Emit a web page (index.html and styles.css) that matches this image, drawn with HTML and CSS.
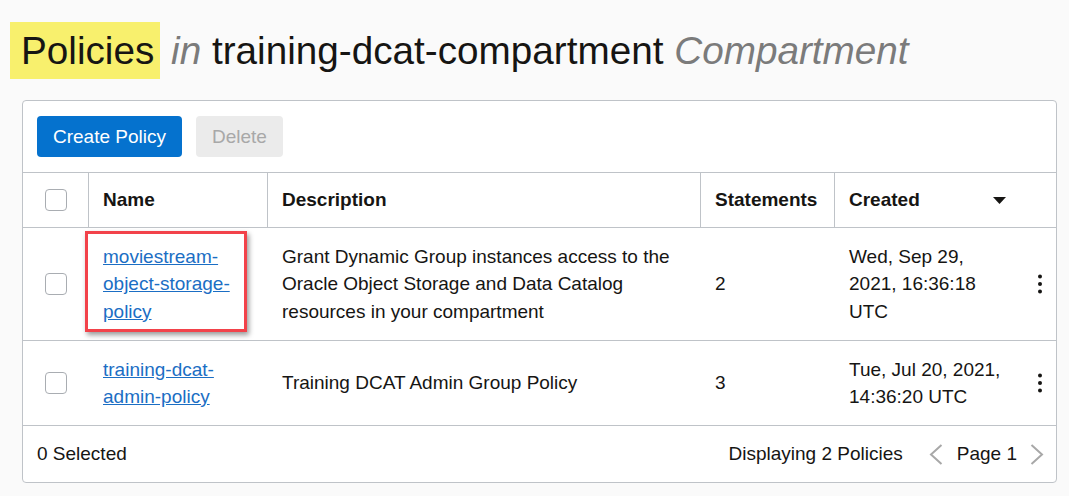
FILE: index.html
```html
<!DOCTYPE html>
<html>
<head>
<meta charset="utf-8">
<title>Policies</title>
<link rel="stylesheet" href="styles.css">
</head>
<body>
<div class="page">
  <h1 class="title"><span class="hl">Policies</span> <em>in</em> training-dcat-compartment <em>Compartment</em></h1>
  <div class="card">
    <div class="toolbar">
      <button class="btn primary">Create Policy</button>
      <button class="btn disabled">Delete</button>
    </div>
    <div class="row head">
      <div class="cell chk sep"><span class="box"></span></div>
      <div class="cell sep">Name</div>
      <div class="cell sep">Description</div>
      <div class="cell sep">Statements</div>
      <div class="cell created-h">Created
        <svg class="sort" width="13" height="7" viewBox="0 0 13 7"><polygon points="0,0 13,0 6.5,7" fill="#161513"/></svg>
      </div>
    </div>
    <div class="row r1">
      <div class="cell chk"><span class="box"></span></div>
      <div class="cell name"><a href="#">moviestream-object-storage-policy</a><span class="mark"></span></div>
      <div class="cell">Grant Dynamic Group instances access to the Oracle Object Storage and Data Catalog resources in your compartment</div>
      <div class="cell">2</div>
      <div class="cell created"><span class="date">Wed, Sep 29, 2021, 16:36:18 UTC</span>
        <svg class="kebab" width="4" height="20" viewBox="0 0 4 20"><circle cx="2" cy="2.5" r="2"/><circle cx="2" cy="10" r="2"/><circle cx="2" cy="17.5" r="2"/></svg>
      </div>
    </div>
    <div class="row r2">
      <div class="cell chk"><span class="box"></span></div>
      <div class="cell name"><a href="#">training-dcat-admin-policy</a></div>
      <div class="cell">Training DCAT Admin Group Policy</div>
      <div class="cell">3</div>
      <div class="cell created"><span class="date">Tue, Jul 20, 2021, 14:36:20 UTC</span>
        <svg class="kebab" width="4" height="20" viewBox="0 0 4 20"><circle cx="2" cy="2.5" r="2"/><circle cx="2" cy="10" r="2"/><circle cx="2" cy="17.5" r="2"/></svg>
      </div>
    </div>
    <div class="foot">
      <span>0 Selected</span>
      <div class="pager">
        <span class="count">Displaying 2 Policies</span>
        <svg class="chev" width="14" height="21" viewBox="0 0 14 21"><polyline points="12.5,1 2,10.5 12.5,20" fill="none" stroke="#a8a8a8" stroke-width="2"/></svg>
        <span class="pg">Page 1</span>
        <svg class="chev" width="14" height="21" viewBox="0 0 14 21"><polyline points="1.5,1 12,10.5 1.5,20" fill="none" stroke="#a8a8a8" stroke-width="2"/></svg>
      </div>
    </div>
  </div>
</div>
</body>
</html>
```
FILE: styles.css
```css
* { box-sizing: border-box; }
body {
  margin: 0;
  background: #fafafa;
  font-family: "Liberation Sans", Arial, sans-serif;
  color: #161513;
}
.page { padding: 22px 12px 0 10px; }
.title {
  margin: 0;
  font-size: 38.7px;
  font-weight: normal;
  line-height: 57px;
  height: 57px;
  white-space: nowrap;
}
.hl {
  display: inline-block;
  background: #f8f06d;
  padding: 0 6px 0 11px;
}
.title em { color: #7b7b7b; }
.card {
  margin: 21px 0 0 12px;
  background: #fff;
  border: 1px solid #bfc3c8;
  border-radius: 4px;
}
.toolbar {
  display: flex;
  gap: 14px;
  padding: 15px 14px;
  border-bottom: 1px solid #bfc3c8;
}
.btn {
  font-family: inherit;
  font-size: 19px;
  height: 41px;
  padding: 0 16px;
  border: 0;
  border-radius: 4px;
}
.primary { background: #0572ce; color: #fff; }
.disabled { background: #ebebeb; color: #a8a8a8; }
.row {
  display: grid;
  grid-template-columns: 66px 179px 433px 134px 1fr;
  border-bottom: 1px solid #bfc3c8;
  font-size: 19px;
  line-height: 27.5px;
}
.head { min-height: 55px; font-weight: bold; }
.r1 { min-height: 113px; }
.r2 { min-height: 85px; }
.cell {
  display: flex;
  align-items: center;
  padding: 0 14px;
}
.sep { border-right: 1px solid #bfc3c8; }
.chk { justify-content: center; padding: 0; }
.box {
  width: 22px;
  height: 22px;
  border: 1px solid #a9adb2;
  border-radius: 4px;
  background: #fff;
}
.created-h { justify-content: space-between; padding-right: 50px; }
.created { justify-content: space-between; padding-right: 14px; }
.date { width: 160px; }
.kebab { fill: #161513; }
.name { position: relative; }
.name a { color: #1b6ec4; text-decoration: underline; }
.mark {
  position: absolute;
  left: -4px;
  top: 3px;
  width: 162px;
  height: 101px;
  border: 3px solid #f2424a;
  box-shadow: 2px 3px 5px rgba(0, 0, 0, 0.4);
  pointer-events: none;
}
.foot {
  display: flex;
  align-items: center;
  justify-content: space-between;
  height: 56px;
  padding: 0 12px 0 14px;
  font-size: 19px;
}
.pager { display: flex; align-items: center; }
.count { margin-right: 26px; }
.pg { margin: 0 13px 0 14px; }
```
